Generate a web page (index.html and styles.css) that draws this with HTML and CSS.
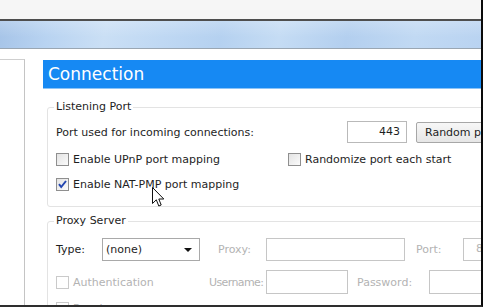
FILE: index.html
```html
<!DOCTYPE html>
<html>
<head>
<meta charset="utf-8">
<link rel="stylesheet" href="styles.css">
</head>
<body>
<div class="window">
  <div class="topstrip"></div>
  <div class="ribbon"></div>
  <div class="main">
    <div class="sidebar"></div>
    <div class="content">
      <div class="title">Connection</div>
      <fieldset class="group g1">
        <legend>Listening Port</legend>
        <div class="row port-row">
          <span class="port-label">Port used for incoming connections:</span>
          <span class="input port-input">443</span>
          <span class="button">Random port</span>
        </div>
        <div class="row check-row r-upnp">
          <label class="cell-a"><span class="cb"></span>Enable UPnP port mapping</label>
          <label><span class="cb"></span>Randomize port each start</label>
        </div>
        <div class="row check-row r-nat">
          <label class="cell-a"><span class="cb checked"><svg viewBox="0 0 13 13" width="13" height="13"><path d="M3 6.2 L5.2 9 L10 3" fill="none" stroke="#2346b0" stroke-width="2"/></svg></span>Enable NAT-PMP port mapping</label>
        </div>
      </fieldset>
      <fieldset class="group g2">
        <legend>Proxy Server</legend>
        <div class="row type-row">
          <span class="lbl type-lbl">Type:</span>
          <span class="select"><span>(none)</span><span class="arrow"></span></span>
          <span class="lbl dis proxy-lbl">Proxy:</span>
          <span class="input dis-input proxy-input"></span>
          <span class="lbl dis port-lbl">Port:</span>
          <span class="input dis-input port2-input">8080</span>
        </div>
        <div class="row auth-row">
          <label class="auth-cell dis"><span class="cb dis-cb"></span>Authentication</label>
          <span class="lbl dis user-lbl">Username:</span>
          <span class="input dis-input user-input"></span>
          <span class="lbl dis pass-lbl">Password:</span>
          <span class="input dis-input pass-input"></span>
        </div>
        <div class="row last-row">
          <label class="dis"><span class="cb dis-cb"></span>Resolve names</label>
        </div>
      </fieldset>
    </div>
  </div>
  <svg class="cursor" width="13" height="21" viewBox="0 0 13 21">
    <path d="M0.5 0.5 L0.5 16.5 L4.3 12.8 L6.8 19 L9.2 18 L6.8 12 L11.8 12 Z" fill="#fff" stroke="#111" stroke-width="1" stroke-linejoin="round"/>
  </svg>
</div>
</body>
</html>
```
FILE: styles.css
```css
html, body {
  margin: 0;
  padding: 0;
  background: #fff;
}
body {
  font-family: "DejaVu Sans", Verdana, sans-serif;
  font-size: 11px;
  color: #1e1e1e;
}
.window {
  position: relative;
  width: 481px;
  height: 305px;
  border-right: 2px solid #0a0a0a;
  border-bottom: 2px solid #2e2e2e;
  overflow: hidden;
  background: #fff;
}
.topstrip {
  height: 19px;
  background: #f6f6f6;
  border-bottom: 2px solid #4e4e4e;
}
.ribbon {
  height: 27px;
  background:
    linear-gradient(180deg, rgba(255,255,255,0.2) 0%, rgba(255,255,255,0) 60%),
    linear-gradient(100deg, #a6c4e8 0%, #b8d3f1 10%, #cadff5 22%, #bfd8f3 34%, #b5d1f0 46%, #c5dcf4 58%, #b3cfef 72%, #c1d9f3 86%, #b9d3f1 100%);
  border-bottom: 1px solid #9aa6b2;
}
.main {
  display: flex;
  padding-top: 10px;
}
.sidebar {
  flex: none;
  width: 24px;
  height: 260px;
  border-top: 1px solid #cfcfcf;
  border-right: 1px solid #c4c4c4;
  background: #fff;
}
.content {
  flex: none;
  width: 560px;
  margin-left: 18px;
}
.title {
  margin-top: 1px;
  height: 28px;
  line-height: 28px;
  background: #1689f3;
  border-bottom: 1px solid #8cc4f7;
  color: #fff;
  font-size: 17px;
  padding-left: 5px;
}
.group {
  margin: 0 0 0 4px;
  padding: 0 0 0 8px;
  border: 1px solid #e3e3e3;
  border-radius: 3px;
  min-width: 0;
}
.group legend {
  padding: 0 2px;
  margin-left: -2px;
  line-height: 14px;
}
.g1 {
  margin-top: 11px;
  padding-bottom: 15px;
}
.g2 {
  margin-top: 7px;
  padding-bottom: 10px;
}
.row {
  display: flex;
  align-items: center;
  white-space: nowrap;
}
.port-row {
  margin-top: 7px;
  height: 22px;
}
.port-label {
  width: 291px;
  flex: none;
}
.input {
  flex: none;
  box-sizing: border-box;
  border: 1px solid #b9b9b9;
  background: #fff;
  height: 22px;
  line-height: 20px;
}
.port-input {
  width: 60px;
  text-align: right;
  padding-right: 6px;
}
.button {
  flex: none;
  box-sizing: border-box;
  margin-left: 9px;
  width: 96px;
  height: 21px;
  line-height: 19px;
  padding-left: 8px;
  border: 1px solid #a7a7a7;
  border-radius: 2px;
  background: linear-gradient(#f7f7f7, #e6e6e6);
}
.check-row {
  height: 13px;
}
.r-upnp {
  margin-top: 10px;
}
.r-nat {
  margin-top: 12px;
}
.check-row label, .auth-cell, .last-row label {
  display: flex;
  align-items: center;
}
.cell-a {
  width: 232px;
  flex: none;
}
.cb {
  flex: none;
  box-sizing: border-box;
  width: 13px;
  height: 13px;
  border: 1px solid #8f8f8f;
  background: linear-gradient(135deg, #e3e3e3, #fbfbfb);
  margin-right: 4px;
  display: flex;
}
.cb svg {
  margin: -1px;
}
.dis-cb {
  border-color: #cacaca;
  background: #fff;
}
.dis {
  color: #b3b3b3;
}
.lbl {
  flex: none;
}
.type-row {
  margin-top: 10px;
  height: 23px;
}
.type-lbl {
  width: 46px;
}
.select {
  flex: none;
  box-sizing: border-box;
  width: 98px;
  height: 23px;
  border: 1px solid #a9a9a9;
  display: flex;
  align-items: center;
  justify-content: space-between;
  padding: 0 7px 0 3px;
}
.arrow {
  width: 0;
  height: 0;
  border-left: 4px solid transparent;
  border-right: 4px solid transparent;
  border-top: 4px solid #111;
}
.proxy-lbl {
  margin-left: 18px;
  width: 48px;
}
.dis-input {
  border-color: #c6c6c6;
  color: #b3b3b3;
  height: 23px;
}
.proxy-input {
  width: 139px;
}
.port-lbl {
  margin-left: 11px;
  width: 47px;
}
.port2-input {
  width: 60px;
  padding-left: 12px;
}
.auth-row {
  margin-top: 9px;
  height: 24px;
}
.auth-cell {
  width: 153px;
  flex: none;
}
.user-lbl {
  width: 57px;
  letter-spacing: -0.6px;
  overflow: hidden;
}
.user-input {
  width: 82px;
  height: 24px;
}
.pass-lbl {
  margin-left: 9px;
  width: 72px;
}
.pass-input {
  width: 80px;
  height: 24px;
}
.last-row {
  margin-top: 8px;
  height: 13px;
}
.cursor {
  position: absolute;
  left: 152px;
  top: 187px;
}
```
